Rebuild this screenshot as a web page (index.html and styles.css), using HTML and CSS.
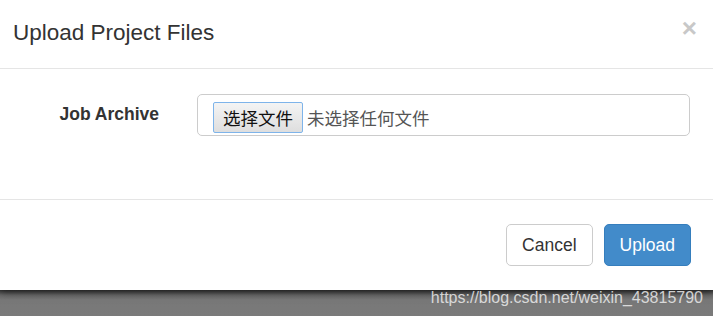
FILE: index.html
```html
<!DOCTYPE html>
<html lang="en">
<head>
<meta charset="utf-8">
<title>Upload Project Files</title>
<link rel="stylesheet" href="styles.css">
</head>
<body>
<div class="modal">
  <div class="modal-header">
    <h4 class="modal-title">Upload Project Files</h4>
    <span class="close">×</span>
  </div>
  <div class="modal-body">
    <div class="form-row">
      <label class="form-label">Job Archive</label>
      <div class="form-control">
        <span class="file-btn">选择文件</span>
        <span class="file-name">未选择任何文件</span>
      </div>
    </div>
  </div>
  <div class="modal-footer">
    <button class="btn btn-default">Cancel</button>
    <button class="btn btn-primary">Upload</button>
  </div>
</div>
<div class="backdrop">
  <span class="watermark">https://blog.csdn.net/weixin_43815790</span>
</div>
</body>
</html>
```

FILE: styles.css
```css
* { box-sizing: border-box; }
html, body {
  margin: 0;
  padding: 0;
}
body {
  width: 713px;
  height: 316px;
  overflow: hidden;
  background: #777;
  font-family: "Liberation Sans", Arial, "Noto Sans CJK SC", sans-serif;
  color: #333;
}
.modal {
  background: #fff;
  height: 290px;
  position: relative;
  z-index: 1;
  box-shadow: 0 2px 8px rgba(0, 0, 0, 0.55);
}
.modal-header {
  height: 69px;
  padding: 17px 16px 0 13px;
  border-bottom: 1px solid #e5e5e5;
  display: flex;
  justify-content: space-between;
  align-items: flex-start;
}
.modal-title {
  margin: 0;
  font-size: 22.5px;
  font-weight: normal;
  line-height: 32px;
  color: #333;
}
.close {
  font-size: 26px;
  font-weight: bold;
  line-height: 26px;
  color: #c8c8c8;
  margin-top: -2px;
}
.modal-body {
  height: 131px;
  padding: 25px 23px 0 0;
  border-bottom: 1px solid #e5e5e5;
}
.form-row {
  display: flex;
  align-items: flex-start;
}
.form-label {
  width: 159px;
  text-align: right;
  font-size: 17.5px;
  font-weight: bold;
  line-height: 25px;
  padding-top: 8px;
  margin-right: 38px;
  color: #333;
}
.form-control {
  flex: 1;
  height: 42px;
  border: 1px solid #ccc;
  border-radius: 5px;
  padding: 7px 15px 0;
  display: flex;
  align-items: flex-start;
  font-family: "Noto Sans CJK SC", "Liberation Sans", sans-serif;
}
.file-btn {
  height: 31px;
  padding: 0 9px;
  border: 1px solid #7eb4ea;
  border-radius: 2px;
  background: linear-gradient(#f4f4f4, #dedede);
  font-size: 17.5px;
  line-height: 29px;
  color: #111;
}
.file-name {
  margin-left: 4px;
  font-size: 17.5px;
  line-height: 31px;
  color: #555;
}
.modal-footer {
  padding: 24px 22px 0;
  display: flex;
  justify-content: flex-end;
  gap: 11px;
}
.btn {
  height: 42px;
  padding: 0 15px;
  font-family: "Liberation Sans", Arial, sans-serif;
  font-size: 17.5px;
  line-height: 40px;
  border-radius: 5px;
  border: 1px solid #ccc;
  background: #fff;
  color: #333;
}
.btn-primary {
  background: #428bca;
  border-color: #357ebd;
  color: #fff;
}
.backdrop {
  height: 26px;
  background: linear-gradient(#3c3c3c, #6a6a6a 5px, #787878 10px, #7a7a7a);
  display: flex;
  justify-content: flex-end;
  padding-right: 10px;
}
.watermark {
  font-size: 16px;
  line-height: 16px;
  color: rgba(235, 235, 235, 0.85);
  position: relative;
  z-index: 2;
}
```
